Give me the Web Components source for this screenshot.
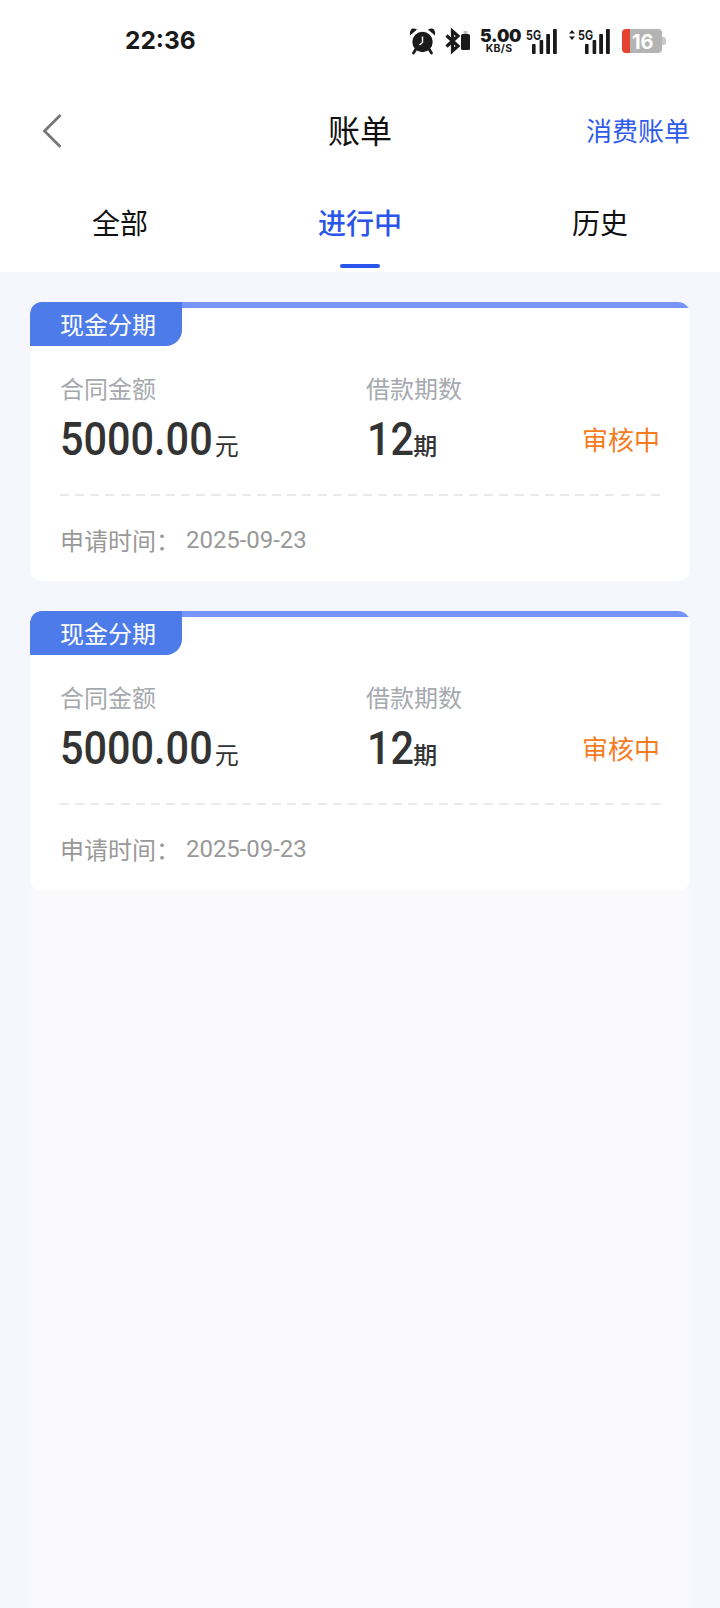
<!DOCTYPE html>
<html lang="zh">
<head>
<meta charset="utf-8">
<title>账单</title>
<style>
  html, body { margin: 0; height: 100%; }
  body { font-family: "Noto Sans CJK SC", Roboto, sans-serif; }
  app-page { height: 1608px; }
</style>
</head>
<body>
<app-page>
  <status-bar slot="top" time="22:36"></status-bar>
  <nav-header slot="top" title="账单" action="消费账单"></nav-header>
  <tab-bar slot="top" active="1"></tab-bar>
  <bill-card type="现金分期" amount="5000.00" term="12" status="审核中" date="2025-09-23"></bill-card>
  <bill-card type="现金分期" amount="5000.00" term="12" status="审核中" date="2025-09-23"></bill-card>
</app-page>

<script>
class AppPage extends HTMLElement {
  connectedCallback() {
    const shadow = this.attachShadow({ mode: 'open' })
    shadow.innerHTML = `
      <style>
        :host {
          display: flex;
          flex-direction: column;
          overflow: hidden;
          background: #F5F7FC;
        }
        .top { background: #fff; height: 272px; flex: none; }
        .list {
          flex: 1;
          display: flex;
          flex-direction: column;
          gap: 30px;
          padding: 30px 30px 0;
          min-height: 0;
        }
        .rest { flex: 1; background: #FAFAFC; margin: -42px 0 0; }
      </style>
      <div class="top"><slot name="top"></slot></div>
      <div class="list">
        <slot></slot>
        <div class="rest"></div>
      </div>
    `
  }
}

class StatusBar extends HTMLElement {
  connectedCallback() {
    const shadow = this.attachShadow({ mode: 'open' })
    const bars = `
      <rect x="6" y="15" width="3.6" height="10" rx=".8"/>
      <rect x="13.6" y="11" width="3.6" height="14" rx=".8"/>
      <rect x="20.2" y="5" width="3.8" height="20" rx=".8"/>
      <rect x="27" y="0" width="3.8" height="25" rx=".8"/>`
    shadow.innerHTML = `
      <style>
        :host {
          display: flex;
          align-items: center;
          justify-content: space-between;
          height: 82px;
          padding: 0 54px 0 125px;
          box-sizing: border-box;
          color: #1a1a1a;
        }
        .time { font: 700 24.5px/1 Inter, sans-serif; margin-top: -1px; }
        .icons { display: flex; align-items: center; height: 26px; }
        svg { display: block; flex: none; fill: currentColor; overflow: visible; }
        .speed { width: 38px; margin: 0 8px 0 9px; text-align: center; font-family: Inter, sans-serif; font-weight: 700; }
        .speed b { display: block; font-size: 17.5px; line-height: 14px; letter-spacing: -.2px; }
        .speed i { display: block; font-style: normal; font-size: 10.5px; line-height: 11px; letter-spacing: .3px; }
        svg text { font-family: Inter, sans-serif; font-weight: 700; }
      </style>
      <div class="time">${this.getAttribute('time')}</div>
      <div class="icons">
        <svg width="25" height="26" viewBox="0 0 25 26" style="margin-right:10px">
          <circle cx="12.5" cy="14" r="10.2"/>
          <path d="M0 7.5 L7 1.5 Q3 -.4 1 1.6 Q-.8 4 0 7.5ZM25 7.5 L18 1.5 Q22 -.4 24 1.6 Q25.8 4 25 7.5Z"/>
          <path d="M6 21 L3.5 25M19 21 L21.5 25" stroke="currentColor" stroke-width="2.8" stroke-linecap="round"/>
          <path d="M12.5 8.5 V14.5 L9.5 17" fill="none" stroke="#fff" stroke-width="1.4"/>
        </svg>
        <svg width="26" height="24" viewBox="0 0 26 24">
          <path d="M1.5 6.5 L13 17 L7.5 22 V2 L13 7 L1.5 17.5" fill="none" stroke="currentColor" stroke-width="3.2"/>
          <rect x="16" y="5" width="9" height="16" rx="1.6"/>
          <rect x="18.5" y="2" width="4" height="3" fill="#bbb"/>
        </svg>
        <div class="speed"><b>5.00</b><i>KB/S</i></div>
        <svg width="31" height="33" viewBox="0 -4 31 33" style="margin-right:12px">
          <text x="0" y="10.5" font-size="13.5" textLength="15" lengthAdjust="spacingAndGlyphs">5G</text>
          ${bars}
        </svg>
        <svg width="41" height="33" viewBox="-10 -4 41 33" style="margin-right:12px">
          <path d="M-7 1 L-4 4.5 H-10ZM-7 11 L-4 7.5 H-10Z"/>
          <text x="-1" y="10.5" font-size="13.5" textLength="15" lengthAdjust="spacingAndGlyphs">5G</text>
          ${bars}
        </svg>
        <svg width="44" height="24" viewBox="0 0 44 24">
          <path d="M6 0 H36 Q40 0 40 4 V20 Q40 24 36 24 H6Z" fill="#B4B4B4"/>
          <path d="M40 8 H41.5 Q44 8 44 10.5 V13.5 Q44 16 41.5 16 H40Z" fill="#C8C8C8"/>
          <path d="M8 0 H4 Q0 0 0 4 V20 Q0 24 4 24 H8Z" fill="#E5412F"/>
          <text x="10" y="19.5" font-size="20" fill="#fff">16</text>
        </svg>
      </div>
    `
  }
}

class NavHeader extends HTMLElement {
  connectedCallback() {
    const shadow = this.attachShadow({ mode: 'open' })
    shadow.innerHTML = `
      <style>
        :host {
          display: grid;
          grid-template-columns: 1fr auto 1fr;
          align-items: center;
          height: 98px;
          padding: 0 30px;
          box-sizing: border-box;
        }
        svg { display: block; margin-left: 11px; }
        h1 { margin: -4px 0 0; font-size: 32px; font-weight: 400; color: #111; line-height: 1; }
        .action { justify-self: end; margin-top: -3px; font-size: 26px; color: #2F5BEA; line-height: 1; }
      </style>
      <svg width="22" height="36" viewBox="0 0 22 36">
        <path d="M19.5 2 L3.5 18 L19.5 34" fill="none" stroke="#777" stroke-width="2.8"/>
      </svg>
      <h1>${this.getAttribute('title')}</h1>
      <div class="action">${this.getAttribute('action')}</div>
    `
  }
}

class TabBar extends HTMLElement {
  connectedCallback() {
    const shadow = this.attachShadow({ mode: 'open' })
    const active = Number(this.getAttribute('active') || 0)
    const tabs = ['全部', '进行中', '历史']
    shadow.innerHTML = `
      <style>
        :host {
          display: grid;
          grid-template-columns: repeat(3, 240px);
          height: 92px;
        }
        .tab {
          display: flex;
          flex-direction: column;
          align-items: center;
          padding-top: 26px;
          box-sizing: border-box;
          font-size: 28px;
          line-height: 32px;
          color: #111;
        }
        .tab.on { color: #2A55EC; font-weight: 500; }
        .tab.on::after {
          content: '';
          width: 40px;
          height: 4px;
          margin-top: 26px;
          border-radius: 2px;
          background: #2A55EC;
        }
      </style>
      ${tabs.map((t, i) => `<div class="tab${i === active ? ' on' : ''}">${t}</div>`).join('')}
    `
  }
}

class BillCard extends HTMLElement {
  connectedCallback() {
    const shadow = this.attachShadow({ mode: 'open' })
    const a = (name) => this.getAttribute(name)
    shadow.innerHTML = `
      <style>
        :host {
          display: block;
          position: relative;
          z-index: 1;
          flex: none;
          height: 279px;
          background: #fff;
          border-radius: 12px;
          overflow: hidden;
          box-sizing: border-box;
          padding: 0 30px;
        }
        .stripe { height: 6px; margin: 0 -30px; background: #7794F8; }
        .tag {
          position: absolute;
          left: 0;
          top: 0;
          width: 152px;
          height: 44px;
          box-sizing: border-box;
          padding-left: 30px;
          background: #4D7BEA;
          border-radius: 12px 0 16px 0;
          color: #fff;
          font-size: 24px;
          line-height: 44px;
        }
        .main {
          display: grid;
          grid-template-columns: 306px 1fr auto;
          padding-top: 63px;
          height: 186px;
          box-sizing: border-box;
        }
        .label { font-size: 24px; line-height: 34px; color: #A6A9AE; }
        .value {
          display: flex;
          align-items: baseline;
          color: #333;
          font: 500 46px/54px Roboto, sans-serif;
          margin-top: 7px;
        }
        .num { display: inline-block; transform-origin: left; transform: scaleX(.9); margin-right: -16px; }
        .term .num { transform: scaleX(.9); margin-right: -7px; }
        .value small {
          font-family: "Noto Sans CJK SC", sans-serif;
          font-size: 24px;
          font-weight: 400;
          margin-left: 1px;
        }
        .term small { font-weight: 500; }
        .term .value { padding-left: 1px; }
        .status { margin-top: 50px; font-size: 26px; line-height: 36px; color: #F57C1F; }
        .line {
          height: 2px;
          background: repeating-linear-gradient(90deg, #EAEAEA 0 9px, transparent 9px 15.15px);
        }
        .foot {
          display: flex;
          padding-top: 27px;
          font-size: 24px;
          line-height: 34px;
          color: #999;
        }
        .foot span:first-child { width: 126px; }
        .date { font-family: Roboto, sans-serif; letter-spacing: -.05px; }
      </style>
      <div class="stripe"></div>
      <div class="tag">${a('type')}</div>
      <div class="main">
        <div>
          <div class="label">合同金额</div>
          <div class="value"><span class="num">${a('amount')}</span><small>元</small></div>
        </div>
        <div class="term">
          <div class="label">借款期数</div>
          <div class="value"><span class="num">${a('term')}</span><small>期</small></div>
        </div>
        <div class="status">${a('status')}</div>
      </div>
      <div class="line"></div>
      <div class="foot"><span>申请时间：</span><span class="date">${a('date')}</span></div>
    `
  }
}

customElements.define('app-page', AppPage)
customElements.define('status-bar', StatusBar)
customElements.define('nav-header', NavHeader)
customElements.define('tab-bar', TabBar)
customElements.define('bill-card', BillCard)
</script>
</body>
</html>
